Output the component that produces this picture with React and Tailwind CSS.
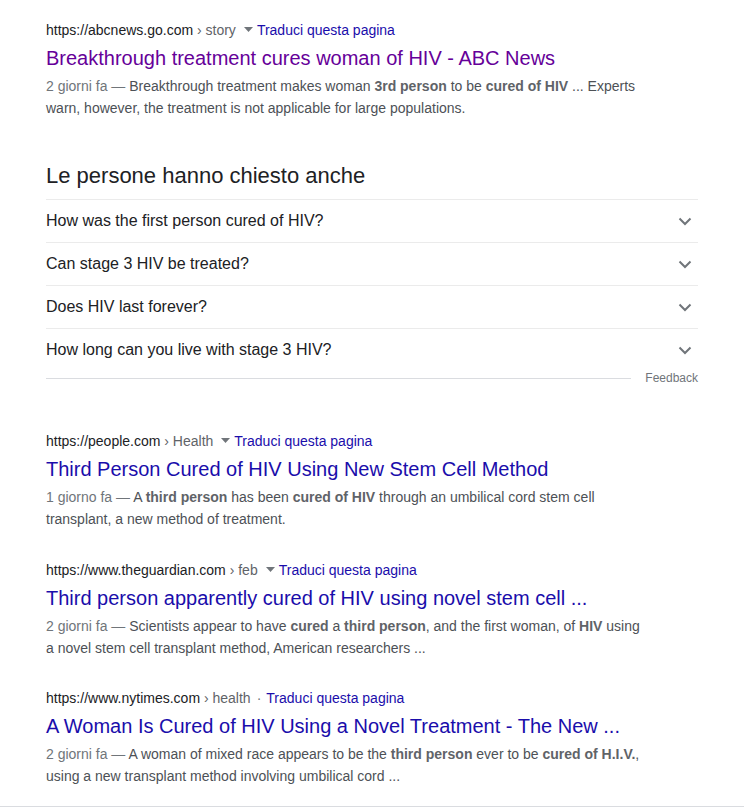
import React from "react";

const Tri = () => (
  <svg width="9" height="6" viewBox="0 0 9 6" className="ml-[8px] mr-[4px] inline-block" style={{ verticalAlign: "2px" }}>
    <path d="M0 0 L9 0 L4.5 5 Z" fill="#70757a" />
  </svg>
);

const Chevron = () => (
  <svg width="14" height="9" viewBox="0 0 14 9" className="mr-[6px]">
    <path d="M1.5 1.5 L7 7 L12.5 1.5" fill="none" stroke="#70757a" strokeWidth="2" />
  </svg>
);

function Result({ url, crumb, dot, title, visited, children, className = "" }) {
  return (
    <div className={className}>
      <div className="h-[20px] text-[14px] leading-[20px] text-[#202124] whitespace-nowrap">
        {url}
        <span className="text-[#5f6368]"> › {crumb}</span>
        {dot ? <span className="ml-[6px] mr-[5px] text-[#70757a]">·</span> : <Tri />}
        <span className="text-[#1a0dab]">Traduci questa pagina</span>
      </div>
      <div
        className={
          "mt-[5px] h-[26px] text-[20px] leading-[26px] whitespace-nowrap " +
          (visited ? "text-[#660099]" : "text-[#1a0dab]")
        }
      >
        {title}
      </div>
      <div className="mt-[4px] w-[600px] text-[14px] leading-[22px] text-[#4d5156]">{children}</div>
    </div>
  );
}

const B = ({ children }) => <b className="font-bold text-[#5f6368]">{children}</b>;

export default function App() {
  const qs = [
    "How was the first person cured of HIV?",
    "Can stage 3 HIV be treated?",
    "Does HIV last forever?",
    "How long can you live with stage 3 HIV?",
  ];
  return (
    <div className="w-[744px] h-[810px] bg-white overflow-hidden" style={{ fontFamily: '"Liberation Sans", Arial, sans-serif' }}>
      <div className="pl-[46px] pt-[20px] w-[698px]">
        <Result
          url="https://abcnews.go.com"
          crumb="story"
          title="Breakthrough treatment cures woman of HIV - ABC News"
          visited
        >
          <span className="text-[#70757a]">2 giorni fa — </span>Breakthrough treatment makes woman <B>3rd person</B> to be <B>cured of HIV</B> ... Experts warn, however, the treatment is not applicable for large populations.
        </Result>

        <div className="mt-[43px]">
          <div className="h-[28px] text-[22px] leading-[28px] text-[#202124]">Le persone hanno chiesto anche</div>
          <div className="mt-[9px]">
            {qs.map((q) => (
              <div key={q} className="h-[43px] border-t border-[#ebebeb] flex items-center justify-between text-[16px] text-[#202124]">
                <span>{q}</span>
                <Chevron />
              </div>
            ))}
          </div>
          <div className="flex items-center h-[14px]">
            <div className="flex-1 h-px bg-[#dadce0]" />
            <span className="ml-[14px] text-[12px] text-[#70757a]">Feedback</span>
          </div>
        </div>

        <Result
          className="mt-[46px]"
          url="https://people.com"
          crumb="Health"
          title="Third Person Cured of HIV Using New Stem Cell Method"
        >
          <span className="text-[#70757a]">1 giorno fa — </span>A <B>third person</B> has been <B>cured of HIV</B> through an umbilical cord stem cell transplant, a new method of treatment.
        </Result>

        <Result
          className="mt-[30px]"
          url="https://www.theguardian.com"
          crumb="feb"
          title="Third person apparently cured of HIV using novel stem cell ..."
        >
          <span className="text-[#70757a]">2 giorni fa — </span>Scientists appear to have <B>cured</B> a <B>third person</B>, and the first woman, of <B>HIV</B> using a novel stem cell transplant method, American researchers ...
        </Result>

        <Result
          className="mt-[29px]"
          url="https://www.nytimes.com"
          crumb="health"
          dot
          title="A Woman Is Cured of HIV Using a Novel Treatment - The New ..."
        >
          <span className="text-[#70757a]">2 giorni fa — </span>A woman of mixed race appears to be the <B>third person</B> ever to be <B>cured of H.I.V.</B>, using a new transplant method involving umbilical cord ...
        </Result>
      </div>
      <div className="mt-[19px] h-px bg-[#dadce0] w-full" />
    </div>
  );
}
